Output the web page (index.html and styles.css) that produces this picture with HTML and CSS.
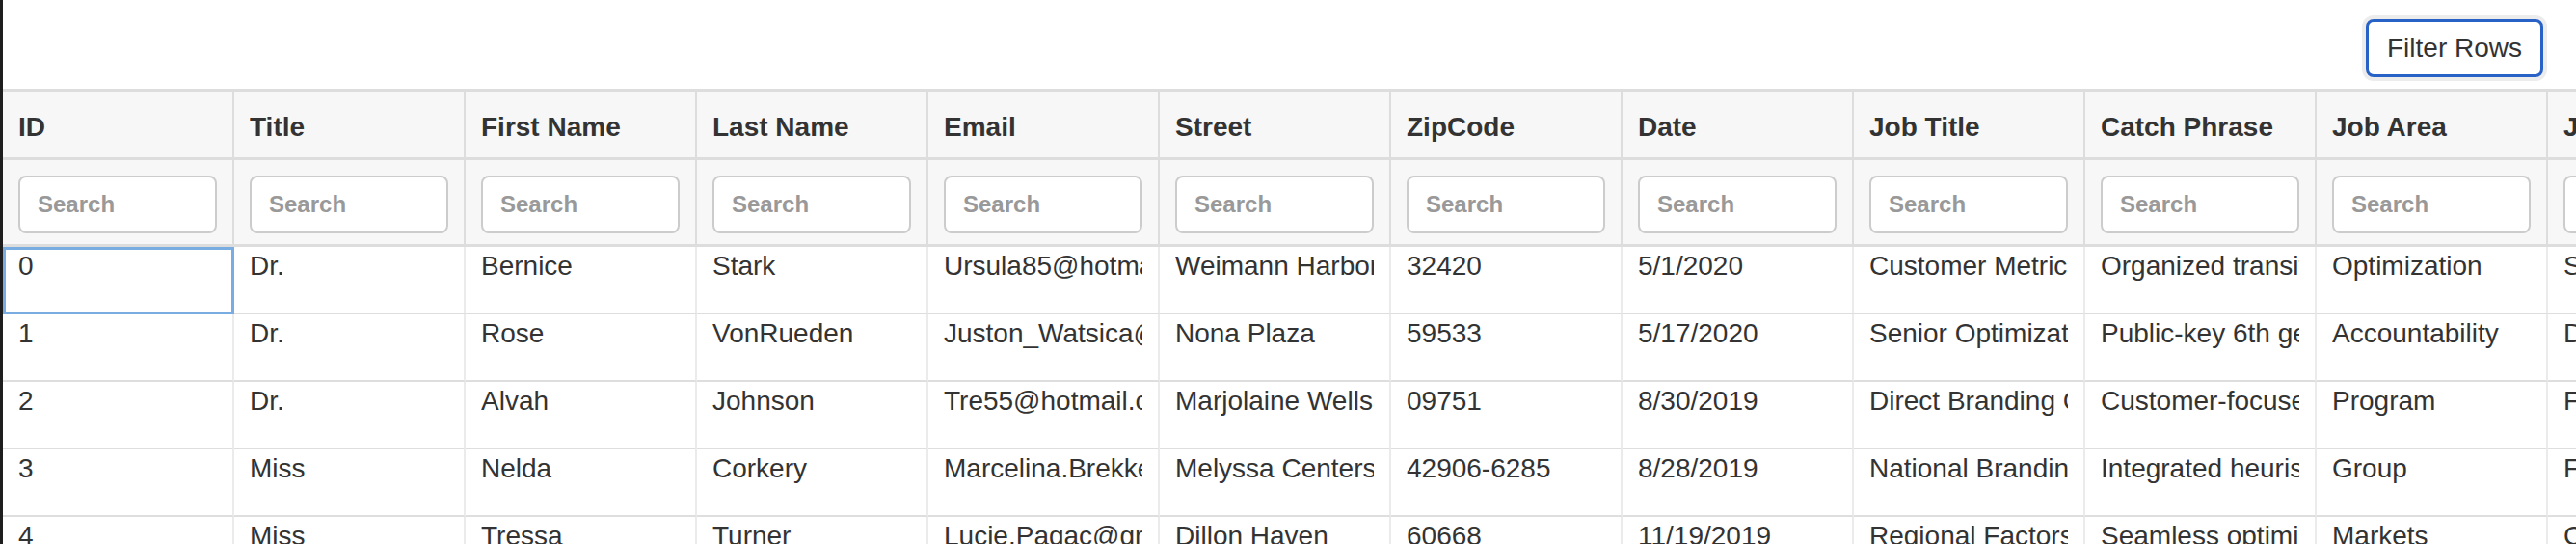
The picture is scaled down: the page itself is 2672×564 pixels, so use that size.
FILE: index.html
```html
<!DOCTYPE html>
<html lang="en">
<head>
<meta charset="utf-8">
<title>Filter Rows</title>
<link rel="stylesheet" href="styles.css">
</head>
<body>
<div class="window">
  <div class="toolbar">
    <button class="btn" type="button">Filter Rows</button>
  </div>
  <div class="grid-wrap">
    <table class="grid">
      <thead>
        <tr class="head-row">
          <th><div class="cell">ID</div></th>
          <th><div class="cell">Title</div></th>
          <th><div class="cell">First Name</div></th>
          <th><div class="cell">Last Name</div></th>
          <th><div class="cell">Email</div></th>
          <th><div class="cell">Street</div></th>
          <th><div class="cell">ZipCode</div></th>
          <th><div class="cell">Date</div></th>
          <th><div class="cell">Job Title</div></th>
          <th><div class="cell">Catch Phrase</div></th>
          <th><div class="cell">Job Area</div></th>
          <th><div class="cell">Job Type</div></th>
        </tr>
        <tr class="filter-row">
          <th><input class="search" type="text" placeholder="Search"></th>
          <th><input class="search" type="text" placeholder="Search"></th>
          <th><input class="search" type="text" placeholder="Search"></th>
          <th><input class="search" type="text" placeholder="Search"></th>
          <th><input class="search" type="text" placeholder="Search"></th>
          <th><input class="search" type="text" placeholder="Search"></th>
          <th><input class="search" type="text" placeholder="Search"></th>
          <th><input class="search" type="text" placeholder="Search"></th>
          <th><input class="search" type="text" placeholder="Search"></th>
          <th><input class="search" type="text" placeholder="Search"></th>
          <th><input class="search" type="text" placeholder="Search"></th>
          <th><input class="search" type="text" placeholder="Search"></th>
        </tr>
      </thead>
      <tbody>
        <tr>
          <td class="selected"><div class="cell">0</div></td>
          <td><div class="cell">Dr.</div></td>
          <td><div class="cell">Bernice</div></td>
          <td><div class="cell">Stark</div></td>
          <td><div class="cell">Ursula85@hotmail.com</div></td>
          <td><div class="cell">Weimann Harbor</div></td>
          <td><div class="cell">32420</div></td>
          <td><div class="cell">5/1/2020</div></td>
          <td><div class="cell">Customer Metrics Specialist</div></td>
          <td><div class="cell">Organized transitional hub</div></td>
          <td><div class="cell">Optimization</div></td>
          <td><div class="cell">Supervisor</div></td>
        </tr>
        <tr>
          <td><div class="cell">1</div></td>
          <td><div class="cell">Dr.</div></td>
          <td><div class="cell">Rose</div></td>
          <td><div class="cell">VonRueden</div></td>
          <td><div class="cell">Juston_Watsica@yahoo.com</div></td>
          <td><div class="cell">Nona Plaza</div></td>
          <td><div class="cell">59533</div></td>
          <td><div class="cell">5/17/2020</div></td>
          <td><div class="cell">Senior Optimization Officer</div></td>
          <td><div class="cell">Public-key 6th generation array</div></td>
          <td><div class="cell">Accountability</div></td>
          <td><div class="cell">Director</div></td>
        </tr>
        <tr>
          <td><div class="cell">2</div></td>
          <td><div class="cell">Dr.</div></td>
          <td><div class="cell">Alvah</div></td>
          <td><div class="cell">Johnson</div></td>
          <td><div class="cell">Tre55@hotmail.com</div></td>
          <td><div class="cell">Marjolaine Wells</div></td>
          <td><div class="cell">09751</div></td>
          <td><div class="cell">8/30/2019</div></td>
          <td><div class="cell">Direct Branding Consultant</div></td>
          <td><div class="cell">Customer-focused bandwidth</div></td>
          <td><div class="cell">Program</div></td>
          <td><div class="cell">Facilitator</div></td>
        </tr>
        <tr>
          <td><div class="cell">3</div></td>
          <td><div class="cell">Miss</div></td>
          <td><div class="cell">Nelda</div></td>
          <td><div class="cell">Corkery</div></td>
          <td><div class="cell">Marcelina.Brekke@gmail.com</div></td>
          <td><div class="cell">Melyssa Centers</div></td>
          <td><div class="cell">42906-6285</div></td>
          <td><div class="cell">8/28/2019</div></td>
          <td><div class="cell">National Branding Engineer</div></td>
          <td><div class="cell">Integrated heuristic matrix</div></td>
          <td><div class="cell">Group</div></td>
          <td><div class="cell">Facilitator</div></td>
        </tr>
        <tr>
          <td><div class="cell">4</div></td>
          <td><div class="cell">Miss</div></td>
          <td><div class="cell">Tressa</div></td>
          <td><div class="cell">Turner</div></td>
          <td><div class="cell">Lucie.Pagac@gmail.com</div></td>
          <td><div class="cell">Dillon Haven</div></td>
          <td><div class="cell">60668</div></td>
          <td><div class="cell">11/19/2019</div></td>
          <td><div class="cell">Regional Factors Agent</div></td>
          <td><div class="cell">Seamless optimizing framework</div></td>
          <td><div class="cell">Markets</div></td>
          <td><div class="cell">Consultant</div></td>
        </tr>
      </tbody>
    </table>
  </div>
</div>
</body>
</html>
```

FILE: styles.css
```css
html, body {
  margin: 0;
  padding: 0;
  background: #ffffff;
}

body {
  font-family: "Liberation Sans", Arial, Helvetica, sans-serif;
  color: #333333;
  overflow: hidden;
}

.window {
  border-left: 3px solid #1e1e1e;
  min-height: 100vh;
  box-sizing: border-box;
  overflow: hidden;
}

.toolbar {
  display: flex;
  justify-content: flex-end;
  padding: 20px 34px 12px 0;
}

.btn {
  display: block;
  height: 60px;
  box-sizing: border-box;
  margin: 0;
  padding: 0 19px;
  border: 3px solid #2962c7;
  border-radius: 8px;
  background: #ffffff;
  box-shadow: 0 0 0 4px #ececec;
  font-family: "Liberation Sans", Arial, Helvetica, sans-serif;
  font-size: 28px;
  line-height: 32px;
  color: #333333;
}

.grid-wrap {
  border-top: 3px solid #dddddd;
  overflow: hidden;
}

.grid {
  width: 2880px;
  table-layout: fixed;
  border-collapse: separate;
  border-spacing: 0;
  font-size: 28px;
  line-height: 32px;
}

.grid th,
.grid td {
  text-align: left;
  vertical-align: top;
}

.cell {
  overflow: hidden;
  white-space: nowrap;
}

.head-row th {
  background: #f7f7f7;
  font-weight: bold;
  padding: 21px 16px 15px;
  border-right: 2px solid #dddddd;
  border-bottom: 3px solid #dddddd;
}

.filter-row th {
  background: #f7f7f7;
  padding: 16px 16px 11px;
  border-right: 2px solid #dddddd;
  border-bottom: 3px solid #dddddd;
}

.search {
  display: block;
  width: 100%;
  height: 60px;
  box-sizing: border-box;
  margin: 0;
  padding: 0 18px;
  border: 2px solid #cccccc;
  border-radius: 8px;
  background: #ffffff;
  font-family: "Liberation Sans", Arial, Helvetica, sans-serif;
  font-size: 24px;
  font-weight: bold;
  color: #555555;
}

.search::placeholder {
  color: #999999;
  opacity: 1;
}

.grid td {
  background: #ffffff;
  padding: 4px 16px 0;
  height: 64px;
  border-right: 2px solid #ebebeb;
  border-bottom: 2px solid #dedede;
}

.grid td.selected {
  outline: 3px solid #79ade2;
  outline-offset: -3px;
}
```
